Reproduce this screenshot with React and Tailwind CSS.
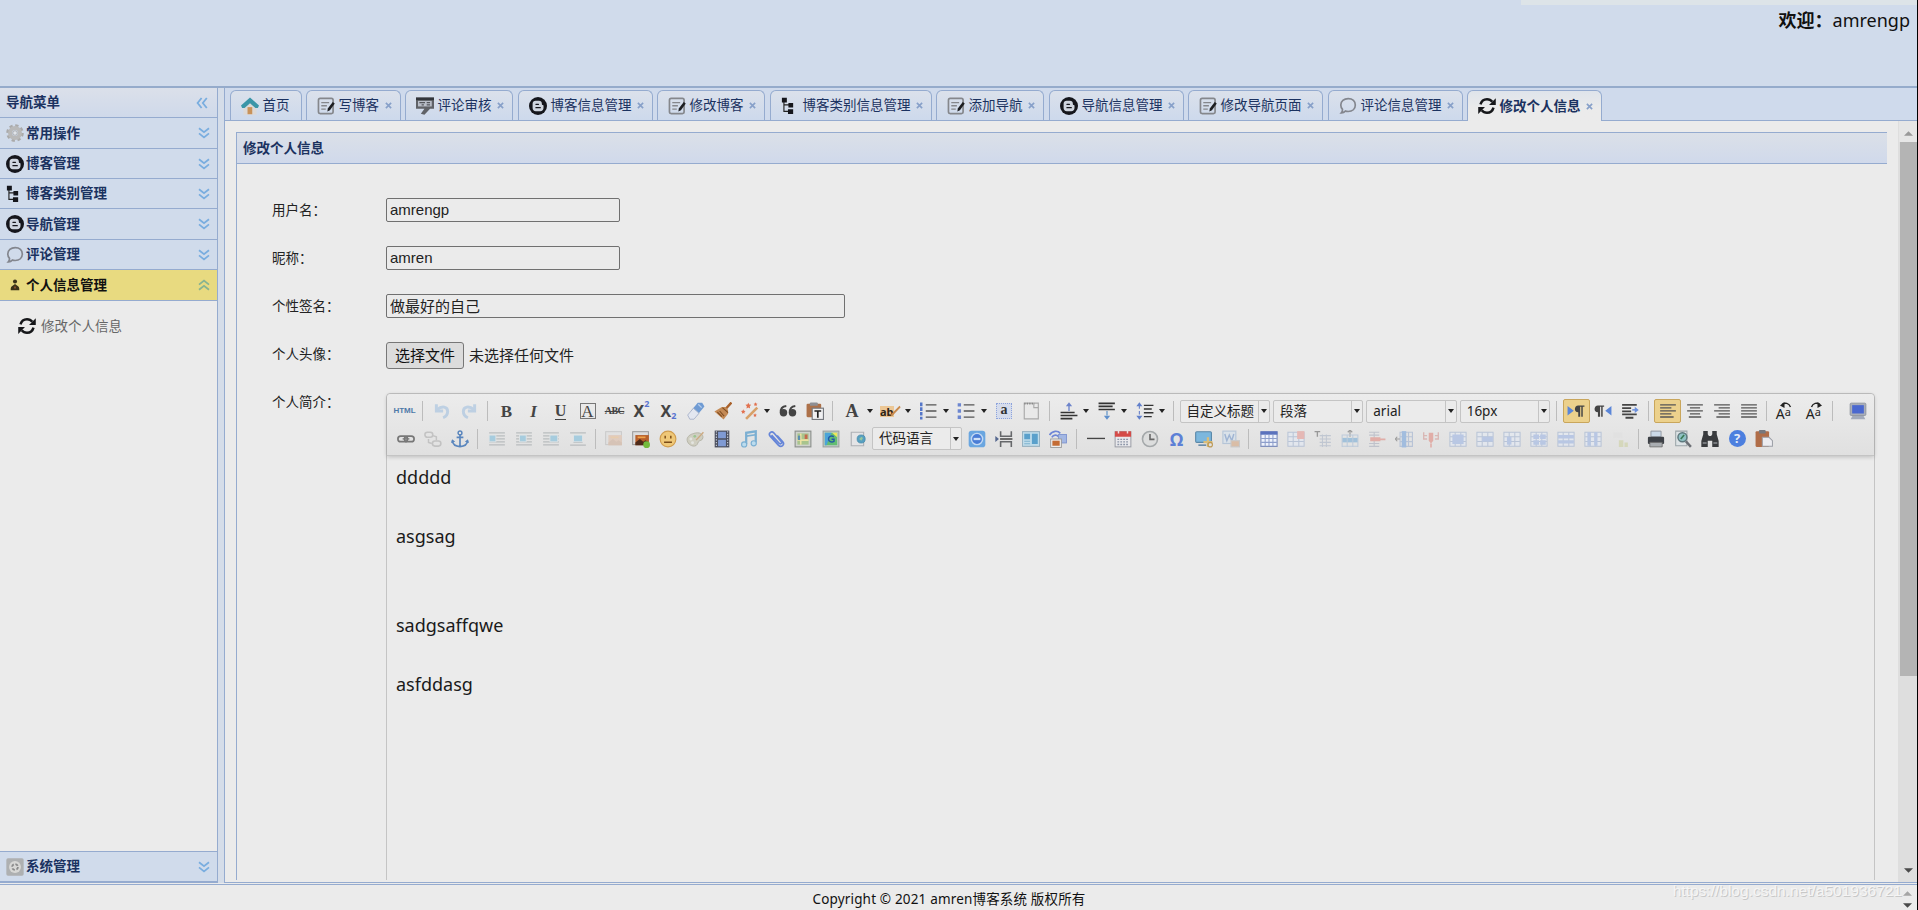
import React from "react"

const Svg = ({ children, className = "size-[18px]", faded = false }) => (
  <svg viewBox="0 0 16 16" fill="none" className={`shrink-0 ${className} ${faded ? "opacity-35" : ""}`}>
    {children}
  </svg>
)

/* ---------- Navigation icons ---------- */

const GearIcon = () => (
  <Svg>
    <circle cx="8" cy="8" r="6.6" stroke="#aaa" strokeWidth="2.4" strokeDasharray="2.9 2.28" />
    <circle cx="8" cy="8" r="4.4" stroke="#b9b9b9" strokeWidth="3.6" />
    <circle cx="8" cy="8" r="2" fill="#e0e4ea" stroke="#999" strokeWidth=".6" />
  </Svg>
)

const BlogIcon = () => (
  <Svg>
    <circle cx="8" cy="8" r="8" fill="#15161c" />
    <path d="M5.800 3.400h3c1.700 0 2.600 1.100 2.600 2.300 0 1 .3 1.300.9 1.400.5.1.6.4.6.8v1.600c0 1.800-1.100 3.100-2.900 3.100H6c-1.700 0-2.800-1.200-2.800-2.800V6c0-1.500 1.100-2.600 2.600-2.600z" fill="#cfd5df" />
    <path d="M6.200 6.500h2.200M6.200 9.500h3.800" stroke="#15161c" strokeWidth="1.200" strokeLinecap="round" />
  </Svg>
)

const TreeIcon = () => (
  <Svg>
    <path d="M2.600 2v10.800H7M2.600 7H8" stroke="#222" strokeWidth="1" />
    <path d="M.8.600h4.400v4.200H.8zM6.600 5.400h4.200v4H6.600zM6.200 10.900h4.600v4.300H6.200z" fill="#15161c" />
  </Svg>
)

const BubbleIcon = () => (
  <Svg>
    <path d="M8.200 1.400c3.900 0 6.300 2.400 6.300 5.700 0 3.400-2.600 5.800-6.300 5.800-.9 0-1.800-.1-2.500-.4-.9.900-2 1.500-3.600 1.600.8-.9 1.100-1.900 1-3.100C2.200 10 1.600 8.700 1.600 7.100c0-3.300 2.700-5.700 6.600-5.700z" stroke="#83868e" strokeWidth="1.500" />
  </Svg>
)

const PersonIcon = () => (
  <Svg>
    <circle cx="8" cy="4.800" r="1.800" fill="#3b3318" />
    <path d="M4.200 12.600c-.2-2.400.6-3.600 2-4.200L8 7.200l1.800 1.200c1.400.6 2.200 1.800 2 4.200z" fill="#3b3318" />
    <path d="M8 8.500l.6 2-.6 1-.6-1z" fill="#b9653a" />
  </Svg>
)

const SyncIcon = () => (
  <Svg>
    <path d="M2.200 6.600C3 3.700 5.200 2 8 2c2 0 3.600.8 4.700 2.200M13.800 9.400C13 12.300 10.800 14 8 14c-2 0-3.600-.8-4.700-2.200" stroke="#16171a" strokeWidth="2.200" />
    <path d="M15.800 1v6.200H9.800zM.2 15V8.800h6z" fill="#16171a" />
  </Svg>
)

const SystemIcon = () => (
  <Svg>
    <rect x=".3" y=".3" width="15.400" height="15.400" rx="1.500" fill="#aeb0b1" />
    <circle cx="8" cy="8" r="5.300" fill="#d8d8d6" />
    <circle cx="8" cy="8" r="2.600" stroke="#8b8b8b" strokeWidth="1.600" strokeDasharray="2.600 1.500" />
  </Svg>
)

const HomeIcon = () => (
  <Svg>
    <path d="M2.200 7L8 2.500 13.800 7v8.700H2.200z" fill="#dcd9d8" />
    <path d="M5.800 9h4.200v6.300H5.800z" fill="#c8925a" />
    <path d="M8 .4l8 7.200-1 2.200h-2.200L8 5.600 3.200 9.800H1L0 7.600z" fill="#3a95a8" />
  </Svg>
)

const WriteIcon = () => (
  <Svg>
    <rect x="1.300" y="1.300" width="13" height="13.400" rx="1.500" stroke="#85878c" strokeWidth="1.500" />
    <path d="M3.800 5h7M3.800 7.800h5M3.800 10.800h4" stroke="#85878c" strokeWidth="1.200" />
    <path d="M14 4.500l1.800 1.300-4.300 6-2.300 1 .4-2.500z" fill="#1d1e21" />
  </Svg>
)

const ReviewIcon = () => (
  <Svg>
    <path d="M0 .5h16v10h-3.500L7.500 15.800l-3.200-1 3.200-4.300H0z" fill="#606267" />
    <path d="M1.800 3.400h12.200v5H1.800z" fill="#b9bec8" />
    <path d="M3 5h5M9.500 5h3M9.500 7h3M5 7h2" stroke="#55575c" strokeWidth="1" />
    <path d="M0 .5h16v2.300H0z" fill="#33353a" />
  </Svg>
)

const Chevrons = ({ dir = "down" }) => {
  const turn = { down: "", up: "rotate-180", left: "rotate-90" }[dir]
  return (
    <svg viewBox="0 0 12 12" fill="none" className={`size-3 shrink-0 ${turn}`}>
      <path d="M1 1.200l5 4 5-4M1 6.400l5 4 5-4" stroke={dir === "up" ? "#86b391" : "#79addf"} strokeWidth="1.800" />
    </svg>
  )
}

/* ---------- Editor toolbar icons ---------- */

const Glyph = ({ className = "", color = "text-[#444]", children }) => (
  <span className={`leading-none ${color} ${className}`}>{children}</span>
)

const UndoIcon = () => (
  <Svg faded>
    <path d="M3 2v6h6" stroke="#6fa3d8" strokeWidth="2.600" />
    <path d="M3.500 7C8 3 13 4 13 8.500c0 2.500-1.500 4.500-4 5.500" stroke="#6fa3d8" strokeWidth="2.600" />
  </Svg>
)
const RedoIcon = () => (
  <Svg faded>
    <path d="M13 2v6H7" stroke="#6fa3d8" strokeWidth="2.600" />
    <path d="M12.500 7C8 3 3 4 3 8.500c0 2.500 1.500 4.500 4 5.500" stroke="#6fa3d8" strokeWidth="2.600" />
  </Svg>
)
const EraserIcon = () => (
  <Svg>
    <path d="M9.500.6h4l2 3.500-6.800 8.200-5-4.500z" fill="#6f9bd3" />
    <path d="M5.700 5.500l5 4.500-4.500 5.300H2.500L.6 11.600z" fill="#e3e7f0" stroke="#9fabc4" strokeWidth=".7" />
    <path d="M10 2l3 3" stroke="#b5cdec" strokeWidth="1.200" />
  </Svg>
)
const BroomIcon = () => (
  <Svg>
    <path d="M15.500.5L10.500 6" stroke="#a9612b" strokeWidth="2.200" />
    <path d="M7 4.500h3.500L12.500 7v3.500L8.500 15.500.4 8.500z" fill="#c48a55" />
    <path d="M7.500 5l5 4.500M3 9l4 4M5 8l4 4.500" stroke="#7e4c22" strokeWidth="1" />
  </Svg>
)
const WandIcon = () => (
  <Svg>
    <path d="M14.500 5L4.500 15" stroke="#d7a169" strokeWidth="2.400" />
    <path d="M6.500.6l.8 1.700 1.800.2-1.300 1.300.3 1.900-1.600-.9-1.600.9.300-1.900L3.900 2.500l1.800-.2zM2 6.500l.6 1.300 1.400.2-1 1 .2 1.400L2 9.800l-1.200.6.2-1.400-1-1 1.400-.2zM13 .3l.5 1.100 1.200.2-.9.8.2 1.200-1-.6-1.100.6.200-1.200-.9-.8 1.200-.2zM12.500 10l.5 1.100 1.200.2-.9.8.2 1.200-1-.6-1.100.6.200-1.200-.9-.8 1.200-.2z" fill="#e2714f" />
  </Svg>
)
const QuoteIcon = () => (
  <Svg>
    <circle cx="4" cy="9.500" r="3.300" fill="#444" />
    <circle cx="12" cy="9.500" r="3.300" fill="#444" />
    <path d="M1.600 9.500C1.200 6 3 4 6.500 3.600M9.600 9.500C9.200 6 11 4 14.500 3.600" stroke="#444" strokeWidth="1.700" />
  </Svg>
)
const PasteTextIcon = () => (
  <Svg>
    <rect x=".5" y="1.500" width="13" height="12" rx="1" fill="#ad7149" />
    <rect x="3.500" y=".4" width="7" height="3" rx=".8" fill="#8e8f94" />
    <rect x="5.500" y="5.500" width="10" height="10" fill="#f0f0f2" stroke="#76797f" strokeWidth="1" />
    <path d="M7.500 8h6M10.500 8v6" stroke="#222" strokeWidth="1.500" />
  </Svg>
)
const HighlightIcon = () => (
  <span className="relative flex h-[18px] w-[20px] items-center">
    <span className="bg-[#ecc795] text-[11px] leading-[11px] font-bold text-[#2d2418]">ab</span>
    <svg viewBox="0 0 16 16" className="absolute top-[3px] -right-px size-3">
      <path d="M14 1L3 12l-1 3 3-1L15.500 3z" fill="#c98a4d" />
    </svg>
  </span>
)
const OrderedIcon = () => (
  <Svg>
    <path d="M2 .5v15" stroke="#5577c9" strokeWidth="2.200" strokeDasharray="3.200 1" />
    <path d="M6 2.500h9.500M6 8h9.500M6 13.500h9.500" stroke="#555" strokeWidth="1.200" />
  </Svg>
)
const BulletIcon = () => (
  <Svg>
    <path d="M.6 1h3v3h-3zM.6 6.500h3v3h-3zM.6 12h3v3h-3z" fill="#6c86d0" />
    <path d="M6 2.500h9.500M6 8h9.500M6 13.500h9.500" stroke="#555" strokeWidth="1.200" />
  </Svg>
)
const SelectAllIcon = () => (
  <span className="flex size-4 items-center justify-center border border-dotted border-[#8da3dc] bg-[#d5dcec] pb-0.5 font-['Liberation_Serif',serif] text-[14px] leading-none font-bold text-[#333]">
    a
  </span>
)
const PageIcon = () => (
  <Svg>
    <path d="M2 1h12.500v14H2z" fill="#e9e9e9" stroke="#a9a9a9" />
    <path d="M10.500 1v4h4" stroke="#a9a9a9" />
    <path d="M2 1.500h9" stroke="#888" strokeWidth="1.500" strokeDasharray="1.200 1" />
  </Svg>
)
const SpaceBeforeIcon = () => (
  <Svg>
    <path d="M8 8V3" stroke="#6c83cb" strokeWidth="1.200" />
    <path d="M8 .2l2.800 3.600H5.200z" fill="#6c83cb" />
    <path d="M.5 9.300H13M.5 12h15M.5 14.800H11" stroke="#333" strokeWidth="1.400" />
  </Svg>
)
const SpaceAfterIcon = () => (
  <Svg>
    <path d="M.5 1.200H15M.5 3.900h12.500M.5 6.600H15" stroke="#333" strokeWidth="1.400" />
    <path d="M8 8v4" stroke="#6c9bcb" strokeWidth="1.200" />
    <path d="M8 15.800l2.800-3.600H5.200z" fill="#5f8fcb" />
  </Svg>
)
const LineHeightIcon = () => (
  <Svg>
    <path d="M3 3v10" stroke="#6c83cb" strokeDasharray="3 2" />
    <path d="M3 .2l2.700 3.600H.3zM3 15.800l2.700-3.600H.3z" fill="#6180cb" />
    <path d="M7 3h8.500M7 6.300h7M7 9.600h8.500M7 13h7" stroke="#333" strokeWidth="1.300" />
  </Svg>
)
const LtrIcon = () => (
  <Svg>
    <path d="M.5 3.500l5.500 4.300-5.500 4.300z" fill="#5b86d8" />
    <path d="M10 9.200C7.800 9.200 7 7.800 7 6.200S8.200 3 10 3h5.500v1.200H14V13h-1.300V4.200h-1V13H10z" fill="#444" />
  </Svg>
)
const RtlIcon = () => (
  <Svg>
    <path d="M15.500 3.500L10 7.800l5.500 4.300z" fill="#5b86d8" />
    <path d="M3.500 9.200C1.300 9.200.5 7.800.5 6.200S1.700 3 3.500 3H9v1.200H7.700V13H6.400V4.200h-1V13H3.500z" fill="#444" />
  </Svg>
)
const IndentIcon = () => (
  <Svg>
    <path d="M1 2.500h13M1 5.500h8M1 8.300h8M1 11h13M4 14h7" stroke="#444" strokeWidth="1.600" />
    <path d="M15.800 7l-3.600 2.800V4.200z" fill="#6c90dc" />
    <path d="M10 7h3" stroke="#6c90dc" strokeWidth="1.400" />
  </Svg>
)
const AlignIcon = ({ kind }) => {
  const d = {
    left: "M1 2.500h14M1 5.200h10M1 7.900h14M1 10.600h10M1 13.300h12",
    center: "M1 2.500h14M3.500 5.200h9M1 7.900h14M3.500 10.600h9M2.500 13.300h11",
    right: "M1 2.500h14M5 5.200h10M1 7.900h14M5 10.600h10M3 13.300h12",
    justify: "M1 2.500h14M1 5.200h14M1 7.900h14M1 10.600h14M1 13.300h14",
  }[kind]
  return <Svg><path d={d} stroke="#555" strokeWidth="1.200" /></Svg>
}
const CaseIcon = ({ flip = false }) => (
  <span className="relative flex h-[18px] w-[18px] items-end leading-none text-[#222]">
    <span className="text-[14px] leading-[13px]">A</span>
    <span className="pb-[3px] text-[11px] leading-[10px]">a</span>
    <svg viewBox="0 0 12 6" fill="none" className={`absolute top-0 left-1 h-1.5 w-3 ${flip ? "-scale-x-100" : ""}`}>
      <path d="M2 2.500C5 .3 9 1 10.500 5" stroke="#222" strokeWidth="1.400" />
      <path d="M0 3.500L4.500 0v6z" fill="#222" />
    </svg>
  </span>
)
const MonitorIcon = () => (
  <Svg>
    <rect x="1" y="1" width="14" height="11" rx="1" fill="#a9aeb8" stroke="#868c98" strokeWidth=".7" />
    <rect x="2.800" y="2.800" width="10.400" height="7.400" fill="#4a68cf" />
    <path d="M3 12.500h10l1.500 2.800h-13z" fill="#a3abbb" />
  </Svg>
)

const LinkIcon = () => (
  <Svg>
    <rect x=".8" y="5.400" width="8.500" height="5" rx="2.500" stroke="#777" strokeWidth="1.500" />
    <rect x="6.700" y="5.400" width="8.500" height="5" rx="2.500" stroke="#777" strokeWidth="1.500" />
    <path d="M5 7.900h6" stroke="#777" strokeWidth="1.200" />
  </Svg>
)
const UnlinkIcon = () => (
  <Svg faded>
    <rect x=".8" y="2" width="7" height="4.500" rx="2.200" stroke="#888" strokeWidth="1.400" />
    <rect x="7.500" y="9.800" width="7.500" height="4.500" rx="2.200" stroke="#888" strokeWidth="1.400" />
    <path d="M8 5l3 1v3M4 8v3l3 1" stroke="#888" strokeWidth="1.300" />
  </Svg>
)
const AnchorIcon = () => (
  <Svg>
    <circle cx="8" cy="2.600" r="1.700" stroke="#5a86bd" strokeWidth="1.300" />
    <path d="M8 4.300V15M5 6.500h6M1.200 9.500c.3 3 3 5 6.800 5.200 3.800-.2 6.500-2.200 6.800-5.200" stroke="#5a86bd" strokeWidth="1.500" />
    <path d="M0 11.500l1-3.300 2.700 2.300zM16 11.500l-1-3.300-2.700 2.300z" fill="#5a86bd" />
  </Svg>
)
const FloatIcon = ({ x, w, wide = false }) => (
  <Svg className="size-[18px] opacity-70">
    <path d={wide ? "M1 2.500h14M1 13.500h14M4 11h8" : "M1 2.500h14M1 5.200h14M1 7.900h14M1 10.600h14M1 13.300h14"} stroke="#a8adb0" strokeWidth="1.100" />
    <path d={`M${x} 4.500h${w}v6h-${w}z`} fill="#8dc3dc" stroke="#dfe5e8" strokeWidth=".8" />
  </Svg>
)
const PictureIcon = ({ faded = false, add = false }) => (
  <Svg faded={faded}>
    <rect x=".6" y="1.500" width="14" height="11.500" fill="#ddd" stroke="#999" strokeWidth=".9" />
    <rect x="3" y="4.500" width="12" height="9" fill={faded ? "#d9a27d" : "#b8602c"} />
    <path d="M3 11l4-3 3 2.500 2-1.500 3 2v2.500H3z" fill={faded ? "#c08a66" : "#4e2a19"} />
    <path d="M5 6.500h7" stroke="#f0a24b" strokeWidth="1.500" />
    {add && <circle cx="13" cy="13" r="3" fill="#74bb3d" />}
  </Svg>
)
const SmileIcon = () => (
  <Svg>
    <circle cx="8" cy="8" r="7" fill="#efc878" stroke="#d09c4c" />
    <path d="M5.500 5v2.500M10.500 5v2.500M4.500 10.800h7" stroke="#7a4b17" strokeWidth="1.300" />
  </Svg>
)
const PaletteIcon = () => (
  <Svg className="size-[18px] opacity-80">
    <path d="M7 3c5-1.500 8.500.5 8 4-.4 2.600-3 2-4 3.500-.8 1.600-1 3.500-3.500 3.800C4 14.500.8 11.500 1 8.300 1.100 5.800 3.500 4 7 3z" fill="#cbcab9" stroke="#a7a695" strokeWidth=".8" />
    <circle cx="4.300" cy="8" r="1.300" fill="#e4e5e0" />
    <circle cx="7.800" cy="5.600" r="1.200" fill="#8bbf7c" />
    <circle cx="5.800" cy="11.300" r="1.300" fill="#e4e5e0" />
    <path d="M15.500 2L9 9" stroke="#c79a67" strokeWidth="1.200" />
  </Svg>
)
const FilmIcon = () => (
  <Svg>
    <path d="M1.500.5h13v15h-13z" fill="#4b4f5e" />
    <path d="M4.500 1.500h7V7.300h-7zM4.500 8.700h7v5.800h-7z" fill="#7f9ad3" />
    <path d="M3 1v14M13 1v14" stroke="#c8ccd8" strokeWidth="1" strokeDasharray="1.200 1.200" />
  </Svg>
)
const MusicIcon = () => (
  <Svg>
    <path d="M5.500 12.500V2.500l8.500-1.300v10" stroke="#7bafd2" strokeWidth="2" />
    <path d="M5.500 5.500l8.500-1.300" stroke="#7bafd2" strokeWidth="1.500" />
    <circle cx="3.700" cy="12.800" r="2.300" fill="#bcdcee" stroke="#7bafd2" />
    <circle cx="12.200" cy="11.800" r="2.300" fill="#bcdcee" stroke="#7bafd2" />
  </Svg>
)
const ClipIcon = () => (
  <Svg>
    <path d="M4 4.500l7 7.500c1 1 2.800-.5 1.800-1.700L6 2.500C4 .5.8 3 2.800 5.500l7.500 8.200c2.500 2.300 5.700-.7 3.700-3.200L9 5" stroke="#6585d8" strokeWidth="1.500" />
  </Svg>
)
const MapIcon = () => (
  <Svg>
    <rect x="1" y="1" width="14" height="14" fill="#cfd2cc" stroke="#8b8f8c" />
    <path d="M3 3h10v10H3z" fill="#a8c48d" />
    <path d="M6 3v10M3 9h10" stroke="#ece2a2" strokeWidth="1.400" />
    <path d="M9.500 4h2.500v4h-2.500z" fill="#c6694d" />
    <path d="M3.500 5h2v4h-2z" fill="#5b8fb0" />
  </Svg>
)
const GmapIcon = () => (
  <Svg>
    <rect x="1" y="1" width="14" height="14" fill="#bfc9c4" stroke="#9ba3a0" />
    <path d="M2.500 2.500h11v11h-11z" fill="#63bd72" />
    <path d="M2.500 2.500h6L4 13.500H2.500z" fill="#4aa4d8" />
    <path d="M9 2.500h4.500v4z" fill="#efe65c" />
    <path d="M10.500 6C8 4.500 5.800 6 5.800 8s2.700 3.500 4.900 2V8.300H8.500" stroke="#2258a8" strokeWidth="1.300" />
  </Svg>
)
const FrameIcon = () => (
  <Svg>
    <path d="M2 2h11v12H2z" fill="#e4e4e6" stroke="#adb0b5" />
    <circle cx="10.800" cy="8" r="3.600" fill="#579fc1" stroke="#3f86a6" strokeWidth=".6" />
    <path d="M9 8l2-2 1.500 1-1.500 2.500z" fill="#97c79c" />
  </Svg>
)
const WebAppIcon = () => (
  <Svg>
    <rect x=".6" y=".6" width="14.800" height="14.800" rx="2.500" fill="#6aa6e0" />
    <circle cx="8" cy="8" r="5" fill="#4a7dd6" stroke="#c3d9f3" strokeWidth="1.300" />
    <path d="M5 8h6" stroke="#cfe0f6" strokeWidth="2" />
  </Svg>
)
const PageBreakIcon = () => (
  <Svg>
    <path d="M5 1v4.500h9.500V1M5 15v-4.500h9.500V15" stroke="#66686b" strokeWidth="1.400" />
    <path d="M4.500 8h11" stroke="#333" strokeWidth="1.200" />
    <path d="M.3 5.400L3.500 8 .3 10.600z" fill="#56688f" />
  </Svg>
)
const TemplateIcon = () => (
  <Svg>
    <rect x=".3" y="1.500" width="15.400" height="13" fill="#bfdcea" stroke="#8aa7b8" strokeWidth=".8" />
    <path d="M2 3.300h5.200v5H2zM8.800 3.300H14v9.200H8.800z" fill="#5aa0cb" />
    <path d="M2 10h5.200M2 12.200h5.200" stroke="#7fb2cf" strokeWidth="1" />
  </Svg>
)
const BackgroundIcon = () => (
  <Svg>
    <path d="M.5 4.500C3 .3 8 .3 10 3M2.500 6.500c1.500-2.500 4.500-2.500 6-.5" stroke="#6f86d6" strokeWidth="1.500" />
    <rect x="8.500" y="4" width="7" height="7.500" fill="#a3b7e3" stroke="#7d93cf" strokeWidth=".8" />
    <rect x="1.500" y="8" width="9.500" height="7.500" fill="#eee" stroke="#999" strokeWidth=".8" />
    <path d="M3 9.500h6.500v4.500H3z" fill="#c46c35" />
  </Svg>
)
const RuleIcon = () => <Svg><path d="M0 7.500h16" stroke="#444" strokeWidth="1.200" /></Svg>
const CalendarIcon = () => (
  <Svg>
    <rect x="1" y="1.500" width="14" height="13.500" fill="#e9e9ec" stroke="#9b9ea6" strokeWidth=".9" />
    <path d="M.8 1.200h14.400v4.800H.8z" fill="#d44b48" />
    <path d="M4 0v3M12 0v3" stroke="#efe0e0" strokeWidth="1.300" />
    <path d="M3 8.300h10M3 10.600h10M3 12.900h10" stroke="#8d96a8" strokeWidth="1.200" strokeDasharray="1.600 1" />
  </Svg>
)
const ClockIcon = () => (
  <Svg>
    <circle cx="8" cy="8" r="6.700" fill="#dcdddd" stroke="#a4a8aa" strokeWidth="1.400" />
    <path d="M8 3.500V8.300h4" stroke="#666" strokeWidth="1.400" />
  </Svg>
)
const ScreenAddIcon = () => (
  <Svg>
    <rect x=".6" y="1.500" width="14" height="9.500" rx="1" fill="#7cb7dd" stroke="#5b88a8" />
    <path d="M3 13.500h7" stroke="#6a8ca8" strokeWidth="1.500" />
    <path d="M11.500 6.500v8.500M7.500 10.800h8" stroke="#d9bd79" strokeWidth="2" />
    <circle cx="13.500" cy="13" r="2" stroke="#bd9a57" />
  </Svg>
)
const WordImageIcon = () => (
  <Svg className="size-[18px] opacity-45">
    <rect x=".8" y="1" width="11.500" height="11" fill="#cfe0f0" stroke="#7fa2cb" />
    <path d="M2.500 3.500l1.800 6 2.200-5 2.200 5 1.800-6" stroke="#4d7cc0" strokeWidth="1.300" />
    <rect x="8" y="9.500" width="7.500" height="5.500" fill="#d0915f" stroke="#aaa" />
  </Svg>
)

const TableIcon = () => (
  <Svg>
    <path d="M.8 1.500h14.400v13H.8z" fill="#eef2fb" stroke="#7f8fbc" />
    <path d="M.5 1.200h15v3H.5z" fill="#5a72bd" />
    <path d="M1 7.500h14M1 11h14M4.600 4v10.500M8 4v10.500M11.500 4v10.500" stroke="#8d9ecb" strokeWidth=".9" />
  </Svg>
)
const GridIcon = ({ extra, fill = "#a3b9e4" }) => (
  <Svg className="size-[18px] opacity-65">
    <path d="M.8 2h14.400v12.500H.8z" fill="#e3e9f3" stroke="#a3b4d0" strokeWidth=".9" />
    <path d="M1 6h14M1 10.300h14M5.500 2v12.500M10.500 2v12.500" stroke="#a3b4d0" strokeWidth=".9" />
    {extra && <path d={extra} fill={fill} />}
  </Svg>
)
const ParaTableIcon = () => (
  <Svg className="size-[18px] opacity-60">
    <path d="M.5 1.500h5M3 1.500V6" stroke="#666" strokeWidth="1.200" />
    <path d="M5 5h10M5 8h10M5 11h10M5 14h10M7.500 4v11M11 4v11" stroke="#a9b4c6" strokeWidth=".9" />
  </Svg>
)
const InsertRowIcon = () => (
  <Svg className="size-[18px] opacity-65">
    <path d="M8 0v6M6 2l2-2 2 2" stroke="#777" />
    <path d="M1 7h14v4H1z" fill="#7fb0d6" />
    <path d="M1 14.500h14M1 4.500h14M1 4v11M5.500 4v11M10.500 4v11M15 4v11" stroke="#a9bed6" strokeWidth=".9" />
  </Svg>
)
const DeleteRowIcon = () => (
  <Svg className="size-[18px] opacity-60">
    <path d="M1 2h9M1 4.500h9M1 12h9M1 14.500h9M5.500 2v12.500" stroke="#a9aebd" />
    <path d="M2 6.500h9v3.500H2zM11 7.500h4.500v1.500H11z" fill="#e08a80" />
  </Svg>
)
const InsertColIcon = () => (
  <Svg className="size-[18px] opacity-65">
    <path d="M4.500 2h11v12.500h-11zM4.500 6h11M4.500 10.300h11M12 2v12.500" stroke="#a3b4d0" />
    <path d="M6 1h4v14.500H6z" fill="#7fa9dc" />
    <path d="M.3 8h4M2 6L.3 8 2 10" stroke="#777" />
  </Svg>
)
const DeleteColIcon = () => (
  <Svg className="size-[18px] opacity-60">
    <path d="M1.500 2v6h3M14.500 2v6h-3M1.500 5h3M14.500 5h-3" stroke="#d39a95" strokeWidth="1.200" />
    <path d="M6 2.500h4v7L8 12l-2-2.500zM7.300 12h1.400v3.500H7.300z" fill="#e08a80" />
  </Svg>
)
const ChartIcon = () => (
  <Svg className="size-[18px] opacity-30">
    <path d="M2 2h8v5H2z" fill="#ddd" />
    <path d="M7 9h4v6H7zM12 11h3v4h-3z" fill="#b9c065" />
  </Svg>
)

const PrintIcon = () => (
  <Svg>
    <path d="M3.500 1h9v5h-9z" fill="#cbd9e8" stroke="#8c949e" strokeWidth=".8" />
    <rect x=".8" y="6" width="14.400" height="6.500" rx="1" fill="#3d4147" />
    <path d="M2.500 11h11v4h-11z" fill="#a9adb1" stroke="#666" strokeWidth=".7" />
  </Svg>
)
const PreviewIcon = () => (
  <Svg>
    <path d="M1.500 1h10v13h-10z" fill="#dde3e6" stroke="#9aa4a8" strokeWidth=".9" />
    <circle cx="7.500" cy="6.500" r="4" fill="#8fc1c4" stroke="#5d787d" strokeWidth="1.300" />
    <path d="M6 8l3-3.500" stroke="#3a7a55" strokeWidth="1.500" />
    <path d="M10.500 10l4.500 5" stroke="#6c6f75" strokeWidth="2.200" />
  </Svg>
)
const BinocularsIcon = () => (
  <Svg>
    <path d="M2 .8h4v3l1 1.500h2l1-1.500v-3h4v3l1.700 6V15H10V9.500H6V15H.3V9.800l1.700-6z" fill="#393b3e" />
    <path d="M1.500 11.500h3.500M11 11.500h3.500" stroke="#8b8e92" strokeWidth="1.300" />
  </Svg>
)
const HelpIcon = () => (
  <span className="flex size-[17px] items-center justify-center rounded-full bg-[#4c7fdf] text-[13px] leading-none font-bold text-[#e6ecf8]">
    ?
  </span>
)
const PasteIcon = () => (
  <Svg>
    <rect x=".5" y="1" width="12" height="14" rx="1" fill="#b06d48" />
    <rect x="3.500" y="0" width="6" height="3.200" rx=".8" fill="#77787d" />
    <path d="M6.500 6.500h6l3 3v5h-9z" fill="#ececf0" stroke="#9b9ea6" strokeWidth=".9" />
  </Svg>
)

/* ---------- Toolbar pieces ---------- */

const Caret = () => (
  <svg viewBox="0 0 6 4" className="h-1 w-1.5 shrink-0"><path d="M0 0h6L3 4z" fill="#222" /></svg>
)

const Btn = ({ children, on = false, menu = false, className = "" }) => (
  <div className="flex shrink-0 items-center">
    <div
      className={`flex h-6 w-[27px] items-center justify-center ${
        on ? "rounded-xs border border-[#c9a65c] bg-[#ecd18c]" : ""
      } ${className}`}
    >
      {children}
    </div>
    {menu && <div className="flex w-[11px] items-center pl-px"><Caret /></div>}
  </div>
)

const Sep = ({ className = "w-[10.500px]" }) => (
  <div className={`shrink-0 pl-1 ${className}`}>
    <div className="h-5 w-px bg-[#bcbcbc]" />
  </div>
)

const Combo = ({ label, className = "w-[90.500px]" }) => (
  <div className={`flex h-[23px] shrink-0 rounded-xs border border-[#c4c4c4] bg-[#ebebeb] ${className}`}>
    <div className="flex-1 pl-1.5 text-[13.500px] leading-[20px] whitespace-nowrap text-[#222]">{label}</div>
    <div className="flex w-[11px] items-center justify-center border-l border-[#c4c4c4]"><Caret /></div>
  </div>
)

const Toolbar = () => (
  <div className="h-[62px] rounded-t border-b border-[#c4c4c4] bg-linear-to-b from-[#ececec] to-[#e0e0e0] pt-[3px] pl-1 shadow-[0_1px_4px_rgba(0,0,0,0.2)]">
    <div className="flex h-7 items-center">
      <Btn><Glyph className="font-['Liberation_Sans',sans-serif] text-[8px] font-bold" color="text-[#4f7aa8]">HTML</Glyph></Btn>
      <Sep />
      <Btn><UndoIcon /></Btn>
      <Btn><RedoIcon /></Btn>
      <Sep />
      <Btn><Glyph className="font-['Liberation_Serif',serif] text-[17px] font-bold">B</Glyph></Btn>
      <Btn><Glyph className="font-['Liberation_Serif',serif] text-[17px] font-bold italic">I</Glyph></Btn>
      <Btn><Glyph className="border-b border-[#444] font-['Liberation_Serif',serif] text-[16px] leading-[14px] font-bold">U</Glyph></Btn>
      <Btn><Glyph className="flex size-4 items-center justify-center border border-[#777] font-['Liberation_Serif',serif] text-[17px]">A</Glyph></Btn>
      <Btn><Glyph className="font-['Liberation_Serif',serif] text-[10px] font-bold tracking-tighter line-through">ABC</Glyph></Btn>
      <Btn><Glyph className="flex text-[16px] font-bold">X<span className="-mt-1 text-[9px] text-[#5874d0]">2</span></Glyph></Btn>
      <Btn><Glyph className="flex text-[16px] font-bold">X<span className="pt-2 text-[9px] text-[#5874d0]">2</span></Glyph></Btn>
      <Btn><EraserIcon /></Btn>
      <Btn><BroomIcon /></Btn>
      <Btn menu><WandIcon /></Btn>
      <Btn><QuoteIcon /></Btn>
      <Btn><PasteTextIcon /></Btn>
      <Sep />
      <Btn menu><Glyph className="font-['Liberation_Serif',serif] text-[18px] font-bold">A</Glyph></Btn>
      <Btn menu><HighlightIcon /></Btn>
      <Btn menu><OrderedIcon /></Btn>
      <Btn menu><BulletIcon /></Btn>
      <Btn><SelectAllIcon /></Btn>
      <Btn><PageIcon /></Btn>
      <Sep />
      <Btn menu><SpaceBeforeIcon /></Btn>
      <Btn menu><SpaceAfterIcon /></Btn>
      <Btn menu><LineHeightIcon /></Btn>
      <Sep className="w-[10.500px]" />
      <div className="flex gap-[2.900px] pr-0.5">
        <Combo label="自定义标题" />
        <Combo label="段落" />
        <Combo label="arial" />
        <Combo label="16px" />
      </div>
      <Sep />
      <Btn on><LtrIcon /></Btn>
      <Btn><RtlIcon /></Btn>
      <Btn><IndentIcon /></Btn>
      <Sep />
      <Btn on><AlignIcon kind="left" /></Btn>
      <Btn><AlignIcon kind="center" /></Btn>
      <Btn><AlignIcon kind="right" /></Btn>
      <Btn><AlignIcon kind="justify" /></Btn>
      <Sep className="w-[9px]" />
      <Btn className="mr-[3px]"><CaseIcon /></Btn>
      <Btn><CaseIcon flip /></Btn>
      <Sep className="w-4" />
      <Btn><MonitorIcon /></Btn>
    </div>

    <div className="flex h-[27px] items-center pl-px">
      <Btn><LinkIcon /></Btn>
      <Btn><UnlinkIcon /></Btn>
      <Btn><AnchorIcon /></Btn>
      <Sep className="w-2.5" />
      <Btn><FloatIcon x={1} w={6} /></Btn>
      <Btn><FloatIcon x={4} w={6} /></Btn>
      <Btn><FloatIcon x={7} w={7} /></Btn>
      <Btn><FloatIcon x={4} w={8} wide /></Btn>
      <Sep className="w-[9.500px]" />
      <Btn><PictureIcon faded /></Btn>
      <Btn><PictureIcon add /></Btn>
      <Btn><SmileIcon /></Btn>
      <Btn><PaletteIcon /></Btn>
      <Btn><FilmIcon /></Btn>
      <Btn><MusicIcon /></Btn>
      <Btn><ClipIcon /></Btn>
      <Btn><MapIcon /></Btn>
      <Btn className="ml-px"><GmapIcon /></Btn>
      <Btn><FrameIcon /></Btn>
      <Combo label="代码语言" className="mr-[1.500px] ml-[0.500px] w-[90px]" />
      <Btn><WebAppIcon /></Btn>
      <Btn><PageBreakIcon /></Btn>
      <Btn><TemplateIcon /></Btn>
      <Btn><BackgroundIcon /></Btn>
      <Sep />
      <Btn><RuleIcon /></Btn>
      <Btn><CalendarIcon /></Btn>
      <Btn><ClockIcon /></Btn>
      <Btn><Glyph className="text-[18px] font-bold" color="text-[#5d80d6]">Ω</Glyph></Btn>
      <Btn><ScreenAddIcon /></Btn>
      <Btn><WordImageIcon /></Btn>
      <Sep className="w-[11px]" />
      <Btn><TableIcon /></Btn>
      <Btn className="ml-[0.500px]"><GridIcon extra="M9 1h6.500v7H9z" fill="#e6a29c" /></Btn>
      <Btn><ParaTableIcon /></Btn>
      <Btn><InsertRowIcon /></Btn>
      <Btn><DeleteRowIcon /></Btn>
      <Btn><InsertColIcon /></Btn>
      <Btn><DeleteColIcon /></Btn>
      <Btn><GridIcon extra="M3 4h10v8.500H3z" /></Btn>
      <Btn><GridIcon extra="M5.500 6H15v4.300H5.500z" /></Btn>
      <Btn><GridIcon extra="M3.500 6h4v7h-4z" /></Btn>
      <Btn><GridIcon extra="M3 4h5v4H3zM9 4h5v4H9zM3 9h5v4H3zM9 9h5v4H9z" /></Btn>
      <Btn><GridIcon extra="M1 4.500h14v3H1zM1 9h14v3H1z" /></Btn>
      <Btn><GridIcon extra="M3 2h3v12H3zM9 2h3v12H9z" /></Btn>
      <Btn><ChartIcon /></Btn>
      <Sep className="w-[9px]" />
      <Btn><PrintIcon /></Btn>
      <Btn><PreviewIcon /></Btn>
      <Btn><BinocularsIcon /></Btn>
      <Btn><HelpIcon /></Btn>
      <Btn><PasteIcon /></Btn>
    </div>
  </div>
)

/* ---------- Page sections ---------- */

const menu = [
  { title: "常用操作", icon: GearIcon, size: "h-[31px]" },
  { title: "博客管理", icon: BlogIcon, size: "h-[30px]" },
  { title: "博客类别管理", icon: TreeIcon, size: "h-[30px]" },
  { title: "导航管理", icon: BlogIcon, size: "h-[31px]" },
  { title: "评论管理", icon: BubbleIcon, size: "h-[30px]" },
  { title: "个人信息管理", icon: PersonIcon, size: "h-[31px]", active: true },
]

const tabs = [
  { title: "首页", icon: HomeIcon, size: "w-[72px] mr-1", fixed: true },
  { title: "写博客", icon: WriteIcon, size: "w-[95px] mr-1" },
  { title: "评论审核", icon: ReviewIcon, size: "w-[108px] mr-[5px]" },
  { title: "博客信息管理", icon: BlogIcon, size: "w-[135px] mr-1" },
  { title: "修改博客", icon: WriteIcon, size: "w-[108px] mr-[5px]" },
  { title: "博客类别信息管理", icon: TreeIcon, size: "w-[162px] mr-1" },
  { title: "添加导航", icon: WriteIcon, size: "w-[108px] mr-[5px]" },
  { title: "导航信息管理", icon: BlogIcon, size: "w-[135px] mr-1" },
  { title: "修改导航页面", icon: WriteIcon, size: "w-[135px] mr-[5px]" },
  { title: "评论信息管理", icon: BubbleIcon, size: "w-[135px] mr-1" },
  { title: "修改个人信息", icon: SyncIcon, size: "w-[135px]", active: true },
]

const MenuRow = ({ title, icon: Icon, size, active }) => (
  <div
    className={`flex shrink-0 items-center border-b border-[#95abcf] pr-[7px] pl-1.5 font-bold ${size} ${
      active ? "bg-[#e8da80] text-[#111]" : "bg-[#d0dbeb] text-[#1b3260]"
    }`}
  >
    <Icon />
    <span className="ml-0.5 flex-1">{title}</span>
    <Chevrons dir={active ? "up" : "down"} />
  </div>
)

const Sidebar = () => (
  <aside className="flex w-[218px] shrink-0 flex-col border-r border-[#95abcf]">
    <div className="flex h-[30px] shrink-0 items-center justify-between border-b border-[#95abcf] bg-linear-to-b from-[#dbe0ea] to-[#cfd9ea] pr-[9px] pl-1.5 font-bold text-[#1b3260]">
      <span>导航菜单</span>
      <Chevrons dir="left" />
    </div>
    {menu.map((m) => <MenuRow key={m.title} {...m} />)}
    <div className="flex flex-1 items-start pt-4 pl-[18px] text-[#666]">
      <SyncIcon />
      <span className="ml-[5px] leading-[18px]">修改个人信息</span>
    </div>
    <div className="flex h-8 shrink-0 items-center border-t border-b-2 border-[#95abcf] bg-[#d0dbeb] pr-[7px] pl-1.5 font-bold text-[#1b3260]">
      <SystemIcon />
      <span className="ml-0.5 flex-1">系统管理</span>
      <Chevrons />
    </div>
  </aside>
)

const Tab = ({ title, icon: Icon, size, active, fixed }) => (
  <div
    className={`flex shrink-0 items-center rounded-t-[6px] border border-b-0 border-[#95abcf] pl-[10px] text-[#1b3260] ${size} ${
      active ? "h-[31px] bg-linear-to-b from-[#dfe4eb] to-[#ebebeb] to-60% font-bold" : "h-[30px] bg-linear-to-b from-[#dbe1eb] to-[#cdd9ec]"
    }`}
  >
    <Icon />
    <span className="ml-[3.500px] whitespace-nowrap">{title}</span>
    {!fixed && (
      <svg viewBox="0 0 8 8" className="ml-[5.500px] size-[7px] shrink-0">
        <path d="M1 1l6 6M7 1L1 7" stroke="#87a0c9" strokeWidth="1.900" />
      </svg>
    )}
  </div>
)

const Field = ({ label, children }) => (
  <div className="flex h-12 items-center">
    <div className="w-[114px] shrink-0 text-[#222]">{label}</div>
    {children}
  </div>
)

const Input = ({ value, className }) => (
  <input
    defaultValue={value}
    className={`h-6 rounded-xs border border-[#707070] bg-[#ebebeb] pr-1 pl-[3px] pb-px font-['Liberation_Sans','Noto_Sans_CJK_SC',sans-serif] text-[15px] text-[#222] outline-none ${className}`}
  />
)

const ProfileForm = () => (
  <div className="pt-[22px] pl-[35px] text-[13.500px]">
    <Field label="用户名："><Input value="amrengp" className="w-[234px]" /></Field>
    <Field label="昵称："><Input value="amren" className="w-[234px]" /></Field>
    <Field label="个性签名："><Input value="做最好的自己" className="w-[459px]" /></Field>
    <Field label="个人头像：">
      <button className="mt-[3px] h-[27px] w-[78px] rounded-[3px] border border-[#777] bg-[#dcdcdc] text-[15px] text-[#111]">选择文件</button>
      <span className="mt-0.5 ml-[5px] text-[15px] text-[#222]">未选择任何文件</span>
    </Field>
    <div className="flex pt-[15px]">
      <div className="w-[114px] shrink-0 leading-[18px] text-[#222]">个人简介：</div>
      <div className="h-[600px] w-[1489px] rounded-t border border-[#c4c4c4]">
        <Toolbar />
        <div className="pt-[9px] pl-[9px] text-[18px] leading-[25px] text-[#1a1a1a]">
          <p className="mb-[34px]">ddddd</p>
          <p className="mb-16">asgsag</p>
          <p className="mb-[34px]">sadgsaffqwe</p>
          <p>asfddasg</p>
        </div>
      </div>
    </div>
  </div>
)

const Arrow = ({ up = false, color = "#4a4a4a" }) => (
  <svg viewBox="0 0 10 5" className={`h-[5px] w-[9px] ${up ? "rotate-180" : ""}`}>
    <path d="M0 0h10L5 5z" fill={color} />
  </svg>
)

const Scrollbar = () => (
  <div className="flex w-[19px] shrink-0 flex-col items-center bg-[#dedede] pl-px">
    <div className="flex h-[21px] w-full items-center justify-center bg-[#e6e6e6] pt-1"><Arrow up color="#999" /></div>
    <div className="h-[534px] w-[17px] bg-[#b4b4b4]" />
    <div className="mt-auto pb-[9px]"><Arrow /></div>
  </div>
)

const App = () => {
  return (
    <div className="relative flex h-[910px] w-full flex-col overflow-hidden border-r border-black bg-[#ebebeb] font-['Noto_Sans','Noto_Sans_CJK_SC',sans-serif] text-[13.500px]">
      {/* Top banner */}
      <header className="h-[88px] shrink-0 border-b-2 border-[#95abcb] bg-[#d0dbeb]">
        <div className="ml-auto h-[5px] w-[396px] bg-[#dde4e8]" />
        <div className="flex justify-end pt-px pr-[7px] text-[18px] leading-7 text-[#111]">
          <b>欢迎：</b>
          <span>amrengp</span>
        </div>
      </header>

      <div className="flex h-[795px] shrink-0">
        <Sidebar />
        <div className="w-1.5 shrink-0 bg-[#d5dde9]" />

        <main className="flex min-w-0 flex-1 flex-col border-b border-l border-[#95abcf]">
          {/* Tab strip */}
          <div className="flex h-[33px] shrink-0 items-start border-b border-[#95abcf] bg-[#cfdaec] pt-0.5 pl-[5px]">
            {tabs.map((t) => <Tab key={t.title} {...t} />)}
          </div>

          <div className="flex min-h-0 flex-1">
            <div className="min-w-0 flex-1 overflow-hidden pt-[11px] pr-[11px] pl-[11px]">
              <section className="h-[748px] overflow-hidden border-l border-[#95abcf]">
                <div className="h-8 border-y border-[#95abcf] bg-linear-to-b from-[#dbe0e8] to-[#d0d9eb] pl-1.5 leading-[30px] font-bold text-[#1b3260]">
                  修改个人信息
                </div>
                <ProfileForm />
              </section>
            </div>
            <Scrollbar />
          </div>
        </main>
      </div>

      {/* Footer */}
      <footer className="mt-px flex flex-1 items-center border-t border-[#95abcf] text-[#111]">
        <div className="flex-1 pt-1 text-center tracking-[0.17px]">Copyright © 2021 amren博客系统 版权所有</div>
        <div className="flex w-[19px] flex-col items-center gap-[7px] pt-1"><Arrow up color="#a5a5a5" /><Arrow /></div>
      </footer>

      <div className="absolute right-[15px] bottom-[8px] font-['Liberation_Sans',sans-serif] text-[15.500px] leading-[22px] text-[#f5f5f5] [text-shadow:1px_1px_0_#c8c8c8]">
        https://blog.csdn.net/a501936721
      </div>
    </div>
  )
}

export default App
